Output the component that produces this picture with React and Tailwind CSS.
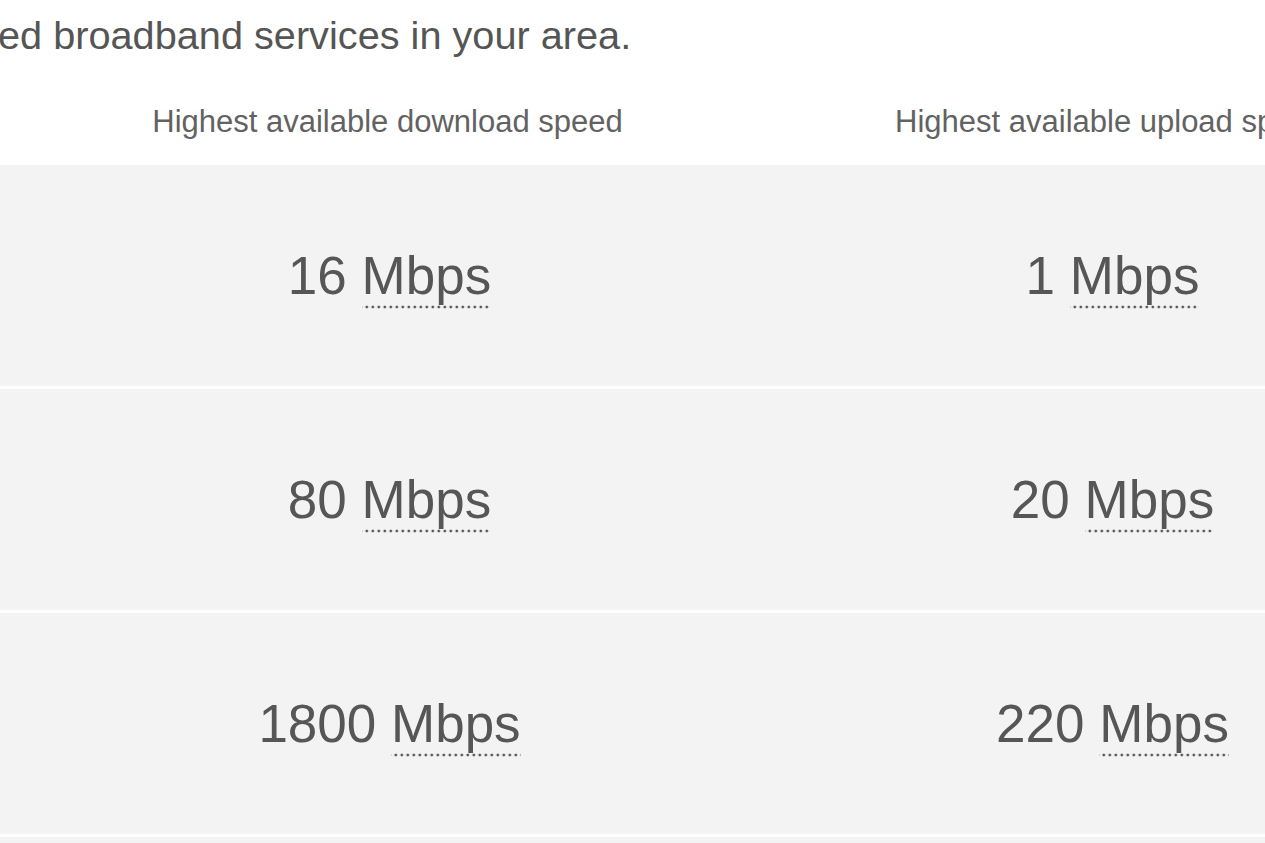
import React from 'react'

const rows = [
  { down: '16', up: '1' },
  { down: '80', up: '20' },
  { down: '1800', up: '220' },
  { down: '', up: '' },
]

const Speed = ({ value }) => (
  <span>
    {value}{' '}
    <span
      title="Megabits per second"
      className="pb-[4px] bg-[radial-gradient(circle,#555_1.2px,transparent_1.7px)] bg-[length:6px_4px] bg-repeat-x bg-bottom"
    >
      Mbps
    </span>
  </span>
)

export default function App() {
  return (
    <div className="w-full h-[843px] overflow-hidden bg-white font-['Liberation_Sans',Arial,sans-serif]">
      {/* Intro */}
      <p className="pt-[16px] -ml-[2px] text-[39.7px] leading-none text-[#555] whitespace-nowrap">
        ed broadband services in your area.
      </p>

      {/* Column headings */}
      <div className="mt-[50px] h-[59px] pl-[26px] grid grid-cols-[723px_723px] text-[31px] leading-none text-[#626262] whitespace-nowrap">
        <div className="text-center">Highest available download speed</div>
        <div className="text-center">Highest available upload speed</div>
      </div>

      {/* Speed rows */}
      <div className="flex flex-col">
        {rows.map((r, i) => (
          <div
            key={i}
            className="h-[224px] shrink-0 bg-[#f3f3f3] border-b-[3px] border-white pl-[28px] grid grid-cols-[723px_723px] items-center text-[53px] leading-none text-[#565656] whitespace-nowrap"
          >
            <div className="text-center">{r.down && <Speed value={r.down} />}</div>
            <div className="text-center">{r.up && <Speed value={r.up} />}</div>
          </div>
        ))}
      </div>
    </div>
  )
}
